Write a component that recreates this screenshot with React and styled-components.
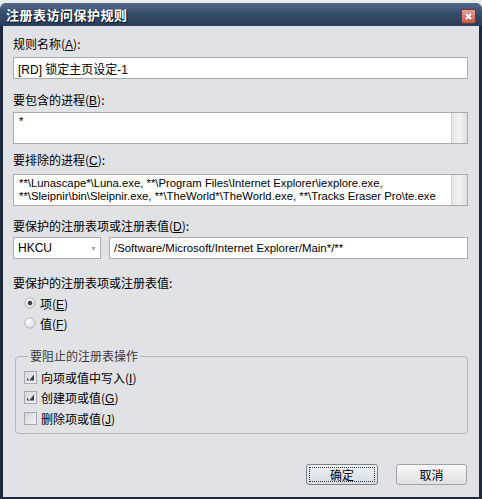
import React from "react";
import styled, { createGlobalStyle } from "styled-components";

const GlobalStyle = createGlobalStyle`
  html, body {
    margin: 0;
    padding: 0;
    background: #e9eaec;
  }
  body {
    font-family: "Liberation Sans", "Noto Sans CJK SC", sans-serif;
    font-size: 12px;
    color: #000;
  }
`;

const Page = styled.div`
  width: 482px;
  height: 499px;
  padding-top: 3px;
  box-sizing: border-box;
  overflow: hidden;
`;

const Window = styled.div`
  height: 496px;
  display: flex;
  flex-direction: column;
  background: #1b2a3e;
  border-radius: 7px 7px 0 0;
  padding: 0 3px 3px 3px;
  box-sizing: border-box;
`;

const TitleBar = styled.div`
  height: 23px;
  flex: none;
  display: flex;
  align-items: center;
  justify-content: space-between;
  background: linear-gradient(#536b89 0%, #374e6b 45%, #283d58 100%);
  border-radius: 6px 6px 0 0;
  margin: 0 -3px;
  padding: 0 6px;
`;

const Title = styled.span`
  color: #fff;
  font-family: "Noto Sans CJK SC", sans-serif;
  font-weight: 700;
  font-size: 13px;
  letter-spacing: 0.5px;
  text-shadow: 1px 1px 1px #0d1624;
`;

const CloseButton = styled.div`
  width: 13px;
  height: 13px;
  margin-top: 3px;
  border: 1px solid #6a3a3a;
  border-radius: 2px;
  background: linear-gradient(#e7a394, #c2584a);
  display: flex;
  align-items: center;
  justify-content: center;
`;

const Client = styled.div`
  flex: 1;
  background: #e1e2e6;
  padding: 10px 11px 12px 10px;
  display: flex;
  flex-direction: column;
`;

const Label = styled.div`
  height: 16px;
  line-height: 16px;
  margin-top: ${(p) => p.$gap || 0}px;
  font-family: "Noto Sans CJK SC", sans-serif;
  font-size: 12px;
  color: #000;
  white-space: nowrap;
  u {
    text-decoration: underline;
    font-family: "Liberation Sans", sans-serif;
  }
`;

const Input = styled.div`
  height: 22px;
  margin-top: ${(p) => p.$gap || 0}px;
  flex: ${(p) => (p.$grow ? 1 : "none")};
  box-sizing: border-box;
  background: #fff;
  border: 1px solid #a9abb0;
  padding: 0 4px;
  display: flex;
  align-items: center;
  font-family: "Liberation Sans", "Noto Sans CJK SC", sans-serif;
  font-size: ${(p) => p.$size || 12}px;
  white-space: nowrap;
  overflow: hidden;
`;

const TextArea = styled.div`
  height: 32px;
  margin-top: ${(p) => p.$gap || 0}px;
  box-sizing: border-box;
  background: #fff;
  border: 1px solid #a9abb0;
  display: flex;
`;

const TextBody = styled.div`
  flex: 1;
  padding: 2px 4px 0 5px;
  font-family: "Liberation Sans", sans-serif;
  font-size: 11.3px;
  line-height: 13px;
  white-space: nowrap;
  overflow: hidden;
`;

const ScrollTrack = styled.div`
  width: 15px;
  flex: none;
  background: linear-gradient(90deg, #e4e5e8 0%, #f3f3f5 50%, #dcdde1 100%);
  border-left: 1px solid #d0d1d5;
`;

const Row = styled.div`
  display: flex;
  gap: 8px;
  margin-top: ${(p) => p.$gap || 0}px;
`;

const Combo = styled(Input)`
  width: 88px;
  justify-content: space-between;
  padding-right: 3px;
`;

const ComboArrow = styled.span`
  color: #a4a6ac;
  font-size: 7px;
`;

const RadioList = styled.div`
  display: flex;
  flex-direction: column;
  margin-top: 2px;
  padding-left: 11px;
`;

const OptionRow = styled.div`
  height: ${(p) => p.$h || 20}px;
  display: flex;
  align-items: center;
  gap: 4px;
  font-family: "Noto Sans CJK SC", sans-serif;
  font-size: 12px;
  u {
    font-family: "Liberation Sans", sans-serif;
  }
`;

const Group = styled.fieldset`
  margin: 15px 0 0 2px;
  padding: 3px 0 4px 8px;
  border: 1px solid #b3b6bd;
  border-radius: 4px;
  min-width: 0;
  legend {
    padding: 0 2px;
    margin-left: 4px;
    height: 16px;
    line-height: 16px;
    font-family: "Noto Sans CJK SC", sans-serif;
    font-size: 12px;
    color: #3a3a3a;
  }
`;

const Buttons = styled.div`
  display: flex;
  justify-content: flex-end;
  gap: 18px;
  margin-top: 30px;
  padding-right: 1px;
`;

const Button = styled.div`
  width: ${(p) => p.$w}px;
  height: 21px;
  box-sizing: border-box;
  border: 1px solid ${(p) => (p.$default ? "#7d8088" : "#a2a5ab")};
  border-radius: 3px;
  background: ${(p) =>
    p.$default
      ? "linear-gradient(#edf1f5, #d5dde6)"
      : "linear-gradient(#f7f7f8, #dfe0e3)"};
  display: flex;
  align-items: center;
  justify-content: center;
  padding: 2px;
  font-family: "Noto Sans CJK SC", sans-serif;
  font-size: 12px;
`;

const FocusRing = styled.div`
  flex: 1;
  align-self: stretch;
  border: 1px dotted #333;
  display: flex;
  align-items: center;
  justify-content: center;
  line-height: 1;
`;

function Radio({ checked }) {
  const id = checked ? "rg1" : "rg2";
  return (
    <svg width="12" height="12" viewBox="0 0 12 12">
      <defs>
        <radialGradient id={id} cx="0.35" cy="0.35" r="0.8">
          <stop offset="0" stopColor="#ffffff" />
          <stop offset="1" stopColor="#d2d4d9" />
        </radialGradient>
      </defs>
      <circle cx="6" cy="6" r="5.2" fill={`url(#${id})`} stroke="#b7bac0" />
      {checked && <circle cx="6" cy="6" r="2.3" fill="#3d3f44" />}
    </svg>
  );
}

function Check({ checked }) {
  return (
    <svg width="13" height="13" viewBox="0 0 13 13">
      <defs>
        <linearGradient id="cbg" x1="0" y1="0" x2="1" y2="1">
          <stop offset="0" stopColor="#d3d5da" />
          <stop offset="1" stopColor="#f5f5f7" />
        </linearGradient>
      </defs>
      <rect x="0.5" y="0.5" width="12" height="12" fill="url(#cbg)" stroke="#a6a9af" />
      {checked && <path d="M3 6.5 L5.2 9.5 L10 3.5 L10 9.5 L3 9.5 Z" fill="#3b3d42" />}
    </svg>
  );
}

function Mnemonic({ k }) {
  return (
    <>
      (<u>{k}</u>)
    </>
  );
}

export default function App() {
  return (
    <Page>
      <GlobalStyle />
      <Window>
        <TitleBar>
          <Title>注册表访问保护规则</Title>
          <CloseButton>
            <svg width="7" height="7" viewBox="0 0 7 7">
              <path d="M1 1 L6 6 M6 1 L1 6" stroke="#fff" strokeWidth="1.8" />
            </svg>
          </CloseButton>
        </TitleBar>
        <Client>
          <Label>
            规则名称<Mnemonic k="A" />:
          </Label>
          <Input $gap={5}>[RD] 锁定主页设定-1</Input>

          <Label $gap={13}>
            要包含的进程<Mnemonic k="B" />:
          </Label>
          <TextArea $gap={4}>
            <TextBody>*</TextBody>
            <ScrollTrack />
          </TextArea>

          <Label $gap={8}>
            要排除的进程<Mnemonic k="C" />:
          </Label>
          <TextArea $gap={6}>
            <TextBody>
              **\Lunascape*\Luna.exe, **\Program Files\Internet Explorer\iexplore.exe,
              <br />
              **\Sleipnir\bin\Sleipnir.exe, **\TheWorld*\TheWorld.exe, **\Tracks Eraser Pro\te.exe
            </TextBody>
            <ScrollTrack />
          </TextArea>

          <Label $gap={12}>
            要保护的注册表项或注册表值<Mnemonic k="D" />:
          </Label>
          <Row $gap={3}>
            <Combo>
              HKCU
              <ComboArrow>▼</ComboArrow>
            </Combo>
            <Input $grow $size={11.4}>
              /Software/Microsoft/Internet Explorer/Main*/**
            </Input>
          </Row>

          <Label $gap={16}>要保护的注册表项或注册表值:</Label>
          <RadioList>
            <OptionRow>
              <Radio checked />
              <span>
                项<Mnemonic k="E" />
              </span>
            </OptionRow>
            <OptionRow>
              <Radio />
              <span>
                值<Mnemonic k="F" />
              </span>
            </OptionRow>
          </RadioList>

          <Group>
            <legend>要阻止的注册表操作</legend>
            <OptionRow $h={20}>
              <Check checked />
              <span>
                向项或值中写入<Mnemonic k="I" />
              </span>
            </OptionRow>
            <OptionRow $h={21}>
              <Check checked />
              <span>
                创建项或值<Mnemonic k="G" />
              </span>
            </OptionRow>
            <OptionRow $h={21}>
              <Check />
              <span>
                删除项或值<Mnemonic k="J" />
              </span>
            </OptionRow>
          </Group>

          <Buttons>
            <Button $w={72} $default>
              <FocusRing>确定</FocusRing>
            </Button>
            <Button $w={71}>取消</Button>
          </Buttons>
        </Client>
      </Window>
    </Page>
  );
}
